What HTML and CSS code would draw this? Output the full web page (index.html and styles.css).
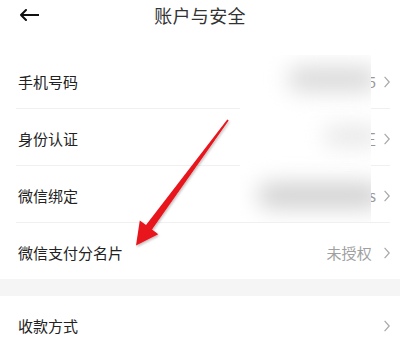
FILE: index.html
```html
<!DOCTYPE html>
<html lang="zh">
<head>
<meta charset="utf-8">
<link rel="stylesheet" href="styles.css">
</head>
<body>
<div class="page">
  <header class="topbar">
    <svg class="back" width="20" height="12" viewBox="0 0 20 12"><path d="M19.5 6H2M7 1L2 6l5 5" fill="none" stroke="#111" stroke-width="2" stroke-linecap="round" stroke-linejoin="round"/></svg>
    <h1 class="title">账户与安全</h1>
  </header>
  <section class="group first">
    <div class="row"><span class="label">手机号码</span><span class="peek"><span>5</span></span><svg class="chev" viewBox="0 0 6 12"><path d="M0.6 0.8L5.2 6L0.6 11.2" fill="none" stroke="#a8a8a8" stroke-width="1.2"/></svg></div>
    <div class="row"><span class="label">身份认证</span><span class="peek"><span>正</span></span><svg class="chev" viewBox="0 0 6 12"><path d="M0.6 0.8L5.2 6L0.6 11.2" fill="none" stroke="#a8a8a8" stroke-width="1.2"/></svg></div>
    <div class="row"><span class="label">微信绑定</span><span class="peek"><span>s</span></span><svg class="chev" viewBox="0 0 6 12"><path d="M0.6 0.8L5.2 6L0.6 11.2" fill="none" stroke="#a8a8a8" stroke-width="1.2"/></svg></div>
    <div class="row last"><span class="label">微信支付分名片</span><span class="value">未授权</span><svg class="chev" viewBox="0 0 6 12"><path d="M0.6 0.8L5.2 6L0.6 11.2" fill="none" stroke="#a8a8a8" stroke-width="1.2"/></svg></div>
  </section>
  <div class="band"></div>
  <section class="group">
    <div class="row last"><span class="label">收款方式</span><svg class="chev" viewBox="0 0 6 12"><path d="M0.6 0.8L5.2 6L0.6 11.2" fill="none" stroke="#a8a8a8" stroke-width="1.2"/></svg></div>
  </section>

  <div class="mask">
    <div class="blob b1"></div>
    <div class="blob b2"></div>
    <div class="blob b3"></div>
  </div>

  <svg class="pointer" width="400" height="342" viewBox="0 0 400 342">
    <defs>
      <filter id="sh" x="-20%" y="-20%" width="140%" height="140%">
        <feDropShadow dx="1" dy="1.5" stdDeviation="1.2" flood-color="#000" flood-opacity="0.25"/>
      </filter>
    </defs>
    <polygon filter="url(#sh)" fill="#e8141c" points="227.3,119.5 228.7,120.5 152,229.5 158.3,234.2 136,245.5 139.8,220.4 146,225"/>
  </svg>
</div>
</body>
</html>
```
FILE: styles.css
```css
* { box-sizing: border-box; }
html, body { margin: 0; padding: 0; background: #fff; }
body {
  font-family: "Noto Sans CJK SC", "Noto Sans", sans-serif;
  color: #222;
  width: 400px;
  height: 342px;
  overflow: hidden;
}
.page { position: relative; width: 400px; height: 342px; }
.topbar {
  height: 52px;
  display: flex;
  align-items: flex-start;
  position: relative;
  padding-top: 2px;
}
.back { position: absolute; left: 19px; top: 9px; }
.title {
  margin: 0 auto;
  font-size: 18px;
  font-weight: 400;
  color: #333;
  line-height: 26px;
  letter-spacing: 0.3px;
}
.group { padding: 0 10px 0 16px; }
.row {
  height: 57px;
  padding-top: 3px;
  display: flex;
  align-items: center;
  border-bottom: 1px solid #f0f0f0;
}
.row.last { border-bottom: none; height: 56px; }
.label { font-size: 15px; color: #222; margin-left: 2px; flex: 1; }
.value { font-size: 15px; color: #a0a0a0; margin-right: 12px; letter-spacing: 0.2px; }
.peek {
  display: flex;
  justify-content: flex-end;
  width: 6px;
  overflow: hidden;
  margin-right: 8px;
}
.peek span { font-size: 15px; color: #999; line-height: 20px; flex: none; }
.chev { width: 6px; height: 12px; }
.band { height: 17px; background: #f5f5f5; }
.mask {
  position: absolute;
  left: 240px;
  top: 55px;
  width: 131px;
  height: 167px;
  background: #fff;
  overflow: hidden;
}
.blob { position: absolute; filter: blur(11px); border-radius: 12px; }
.b1 { left: 48px; top: 12px; width: 90px; height: 24px; background: #d8d8d8; }
.b2 { left: 84px; top: 72px; width: 56px; height: 18px; background: #e4e4e4; }
.b3 { left: 18px; top: 128px; width: 124px; height: 25px; background: #d0d0d0; }
.pointer { position: absolute; left: 0; top: 0; }
```
